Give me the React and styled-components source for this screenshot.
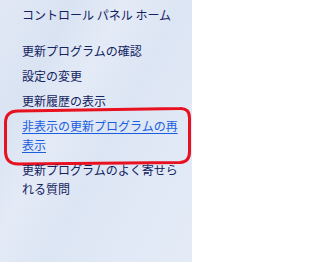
import React from 'react';
import styled, { createGlobalStyle } from 'styled-components';

const Global = createGlobalStyle`
  html, body {
    margin: 0;
    padding: 0;
    background: #ffffff;
  }
  body {
    font-family: 'Noto Sans CJK JP', 'Noto Sans', sans-serif;
  }
`;

const Page = styled.div`
  display: flex;
  width: 207px;
  height: 262px;
  background: #ffffff;
`;

const Panel = styled.nav`
  position: relative;
  width: 192px;
  height: 262px;
  box-sizing: border-box;
  padding: 5px 0 0 22px;
  background: linear-gradient(
    118deg,
    #e2e9f5 0%,
    #d9e3f2 22%,
    #e4ebf7 38%,
    #dce5f3 55%,
    #e1e9f6 75%,
    #e4ebf7 100%
  );
`;

const Header = styled.div`
  font-size: 12px;
  line-height: 19px;
  color: #13235f;
  margin-bottom: 17px;
`;

const List = styled.ul`
  list-style: none;
  margin: 0;
  padding: 0;
  display: flex;
  flex-direction: column;
  gap: 6px;
`;

const Item = styled.li`
  position: relative;
  font-size: 12px;
  line-height: 19px;
  width: 162px;
  color: ${(p) => (p.$link ? '#1a5ee0' : '#13235f')};
  text-decoration: ${(p) => (p.$link ? 'underline' : 'none')};
  text-underline-offset: 2px;
`;

const Mark = styled.svg`
  position: absolute;
  left: -22px;
  top: -14px;
  overflow: visible;
  pointer-events: none;
`;

const items = [
  { text: '更新プログラムの確認' },
  { text: '設定の変更' },
  { text: '更新履歴の表示' },
  { text: '非表示の更新プログラムの再表示', link: true, marked: true },
  { text: '更新プログラムのよく寄せられる質問' },
];

export default function App() {
  return (
    <Page>
      <Global />
      <Panel>
        <Header>コントロール パネル ホーム</Header>
        <List>
          {items.map((it) => (
            <Item key={it.text} $link={it.link}>
              {it.text}
              {it.marked && (
                <Mark width="192" height="62" viewBox="0 0 192 62">
                  <path
                    d="M 18 9 L 180 6.5 Q 189.5 6 189.5 16 L 189.5 50 Q 189.5 60 180 60.5 L 18 62 Q 6 62 5.5 50 L 5.5 21 Q 5.5 9 18 9 Z"
                    fill="none"
                    stroke="#e8111f"
                    strokeWidth="3"
                  />
                </Mark>
              )}
            </Item>
          ))}
        </List>
      </Panel>
    </Page>
  );
}
